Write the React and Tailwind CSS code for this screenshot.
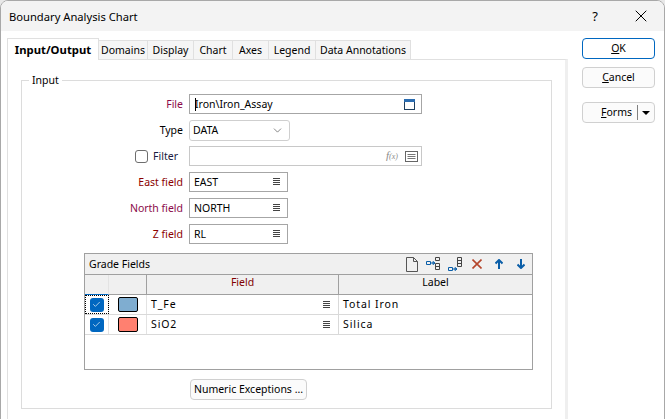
import React from "react";
import { ChevronDown, X, Check } from "lucide-react";

const font = "font-['Noto_Sans','Open_Sans',sans-serif]";

const tabs = [
  { label: "Domains", w: "w-[49px]" },
  { label: "Display", w: "w-[46px]" },
  { label: "Chart", w: "w-[39px]" },
  { label: "Axes", w: "w-[36px]" },
  { label: "Legend", w: "w-[47px]" },
  { label: "Data Annotations", w: "w-[95px]" },
];

const ListIcon = () => (
  <svg width="8" height="8" viewBox="0 0 8 8" className="shrink-0">
    <path d="M0 .5h7M0 2.5h7M0 4.5h7M0 6.5h7" stroke="#444" strokeWidth="1" />
  </svg>
);

function Row({ label, tone = "text-[#8b0000]", top, children }) {
  return (
    <div className={`flex items-center ${top}`}>
      <div className={`w-[167px] pr-[6px] text-right ${tone}`}>{label}</div>
      {children}
    </div>
  );
}

function FieldBox({ value }) {
  return (
    <div className="flex h-[20px] w-[99px] items-center justify-between border border-[#a6a6a6] pl-[4px] pr-[6px]">
      <span>{value}</span>
      <ListIcon />
    </div>
  );
}

const BlueCheck = () => (
  <div className="flex h-[14px] w-[14px] items-center justify-center rounded-[3px] bg-[#0067c0]">
    <Check size={9} color="#dbe9f7" strokeWidth={2} />
  </div>
);

function GridRow({ color, field, label, focus }) {
  return (
    <div className="flex h-[20px] border-b border-[#d9d9d9]">
      <div className={`flex w-[24px] items-center justify-center border-r border-[#e3e3e3] ${focus ? "outline-1 -outline-offset-1 outline-dotted outline-black" : ""}`}>
        <BlueCheck />
      </div>
      <div className="flex w-[38px] items-center justify-center border-r border-[#e3e3e3]">
        <div className={`h-[15px] w-[20px] rounded-[2px] border border-black ${color}`} />
      </div>
      <div className="flex w-[192px] items-center justify-between border-r border-[#d9d9d9] pl-[4px] pr-[7px] tracking-[0.9px]">
        <span>{field}</span>
        <ListIcon />
      </div>
      <div className="flex-1 pl-[4px] leading-[19px] tracking-[0.9px]">{label}</div>
    </div>
  );
}

function GradeFields() {
  return (
    <div className="ml-[62px] mt-[9px] h-[117px] w-[449px] border border-[#a0a0a0]">
      <div className="flex h-[21px] items-center justify-between border-b border-[#a0a0a0] bg-[#f0f0f0] pl-[4px] pr-[7px]">
        <span>Grade Fields</span>
        <div className="flex items-center">
          <svg width="12" height="15" viewBox="0 0 12 15" fill="none">
            <path d="M.5.5h7l4 4v10h-11zM7.500.5v4h4" stroke="#555" />
          </svg>
          <svg width="15" height="14" viewBox="0 0 15 14" fill="none" className="ml-[8px]">
            <path d="M9.500.5h4v3h-4zM9.500 6.500h4v6h-4zM9.500 9.500h4" stroke="#444" />
            <path d="M.5 4.500h4v3h-4z" stroke="#0a5ea8" />
            <path d="M5 6h4M7 4.500l2 1.500l-2 1.500z" stroke="#0a5ea8" />
          </svg>
          <svg width="15" height="14" viewBox="0 0 15 14" fill="none" className="ml-[7px]">
            <path d="M9.500.5h4v9h-4zM9.500 3.500h4M9.500 6.500h4" stroke="#444" />
            <path d="M.5 10.500h4v3h-4z" stroke="#0a5ea8" />
            <path d="M5 12h4M7 10.500l2 1.500l-2 1.500z" stroke="#0a5ea8" />
          </svg>
          <svg width="10" height="10" viewBox="0 0 10 10" fill="none" className="ml-[9px]">
            <path d="M.5.5l9 9M9.500.5l-9 9" stroke="#b5462c" strokeWidth="1.600" />
          </svg>
          <svg width="8" height="10" viewBox="0 0 8 10" fill="none" className="ml-[13px]">
            <path d="M4 10V1M.5 4.500L4 1l3.500 3.500" stroke="#0a5ea8" strokeWidth="2" />
          </svg>
          <svg width="8" height="10" viewBox="0 0 8 10" fill="none" className="ml-[14px]">
            <path d="M4 0v9M.5 5.500L4 9l3.500-3.500" stroke="#0a5ea8" strokeWidth="2" />
          </svg>
        </div>
      </div>
      <div className="flex h-[20px] border-b border-[#a0a0a0] bg-[#f0f0f0] text-center">
        <div className="-mb-px w-[24px] border-r border-b border-r-[#e3e3e3] border-b-[#0067c0]" />
        <div className="w-[38px] border-r border-[#a0a0a0]" />
        <div className="w-[192px] border-r border-[#a0a0a0] text-[#800000]">Field</div>
        <div className="flex-1">Label</div>
      </div>
      <GridRow color="bg-[#7fadd0]" field="T_Fe" label="Total Iron" focus />
      <GridRow color="bg-[#ff8070]" field="SiO2" label="Silica" />
    </div>
  );
}

function TabPanel() {
  return (
    <div className="ml-[6px] w-[561px]">
      <div className="flex h-[21px] items-end">
        <div className="z-10 -mb-px flex h-[22px] w-[92px] items-center justify-center border border-b-0 border-[#e0e0e0] bg-white text-[11.3px] font-bold">
          Input/Output
        </div>
        {tabs.map((t) => (
          <div key={t.label} className={`flex h-[19px] items-center justify-center border-t border-r border-[#e0e0e0] bg-[#f5f5f5] ${t.w}`}>
            {t.label}
          </div>
        ))}
      </div>
      <div className="h-[370px] border-t border-l border-r-[3px] border-[#e0e0e0] border-r-[#efefef] px-[13px] pt-[20px]">
        <div className="relative h-[329px] border border-[#dcdcdc]">
          <span className="absolute -top-[9px] left-[7px] bg-white px-[3px] leading-[16px]">Input</span>
          <Row label="File" tone="text-[#8b0a4a]" top="pt-[13px]">
            <div className="relative flex h-[20px] w-[233px] items-center justify-between border border-[#a6a6a6] pl-[5px] pr-[6px]">
              <span>Iron\Iron_Assay</span>
              <div className="absolute left-[5px] top-[3px] h-[13px] w-px bg-black" />
              <svg width="11" height="11" viewBox="0 0 11 11" fill="none">
                <rect x=".5" y=".5" width="10" height="10" stroke="#1f3f5f" />
                <rect x="0" y="0" width="11" height="3" fill="#2b6cb0" />
              </svg>
            </div>
          </Row>
          <Row label="Type" tone="text-black" top="pt-[6px]">
            <div className="flex h-[21px] w-[101px] items-center justify-between rounded-[3px] border border-[#cfcfcf] pl-[3px] pr-[5px]">
              <span>DATA</span>
              <ChevronDown size={13} color="#555" strokeWidth={1.300} />
            </div>
          </Row>
          <div className="flex items-center pt-[5px]">
            <div className="flex w-[167px] items-center justify-end pr-[11px]">
              <div className="mr-[5px] h-[13px] w-[13px] rounded-[3px] border border-[#6e6e6e]" />
              <span className="text-[#1a1a40]">Filter</span>
            </div>
            <div className="flex h-[20px] w-[233px] items-center justify-end gap-[7px] border border-[#c8c8c8] pr-[3px]">
              <span className="font-['Liberation_Serif',serif] text-[11px] italic text-[#8a8a8a]">f<span className="text-[8px]">(x)</span></span>
              <svg width="13" height="11" viewBox="0 0 13 11" fill="none">
                <rect x=".5" y=".5" width="12" height="10" stroke="#666" />
                <path d="M2.500 3.500h8M2.500 5.500h8M2.500 7.500h8" stroke="#777" />
              </svg>
            </div>
          </div>
          <Row label="East field" top="pt-[6px]"><FieldBox value="EAST" /></Row>
          <Row label="North field" tone="text-[#8b0a4a]" top="pt-[6px]"><FieldBox value="NORTH" /></Row>
          <Row label="Z field" top="pt-[6px]"><FieldBox value="RL" /></Row>
          <GradeFields />
          <div className="ml-[168px] mt-[9px] flex h-[21px] w-[117px] items-center justify-center rounded-[4px] border border-[#d0d0d0] bg-[#fbfbfb]">
            Numeric Exceptions ...
          </div>
        </div>
      </div>
    </div>
  );
}

function SideButtons() {
  return (
    <div className="ml-[14px] flex w-[73px] flex-col pt-0">
      <div className="flex h-[21px] items-center justify-center rounded-[4px] border border-[#0067c0]">
        <span><span className="underline">O</span>K</span>
      </div>
      <div className="mt-[8px] flex h-[21px] items-center justify-center rounded-[4px] border border-[#d0d0d0] bg-[#fbfbfb]">
        <span><span className="underline">C</span>ancel</span>
      </div>
      <div className="mt-[14px] flex h-[21px] items-center justify-end rounded-[4px] border border-[#d0d0d0] bg-[#fbfbfb]">
        <span className="pr-[5px]"><span className="underline">F</span>orms</span>
        <div className="flex h-[15px] w-[17px] items-center justify-center border-l border-[#808080]">
          <div className="h-0 w-0 border-x-[4px] border-t-[4px] border-x-transparent border-t-black" />
        </div>
      </div>
    </div>
  );
}

export default function App() {
  return (
    <div className={`${font} h-[419px] w-[665px] overflow-hidden bg-[#e8e8e8] text-[10.5px] leading-[15px] text-black`}>
      <div className="h-[430px] overflow-hidden rounded-t-[8px] border border-[#a8a8a8] bg-white">
        <div className="flex h-[30px] items-center justify-between bg-[#f3f3f3] pl-[8px]">
          <span className="text-[11.2px]">Boundary Analysis Chart</span>
          <div className="flex items-center">
            <span className="w-[46px] text-center text-[13px]">?</span>
            <div className="flex w-[46px] justify-center"><X size={20} strokeWidth={1.200} /></div>
          </div>
        </div>
        <div className="flex pt-[7px]">
          <TabPanel />
          <SideButtons />
        </div>
      </div>
    </div>
  );
}
